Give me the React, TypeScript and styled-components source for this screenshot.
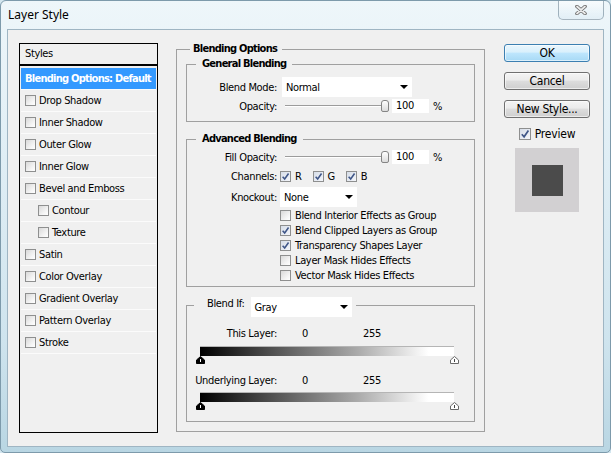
import React from 'react';
import styled, { createGlobalStyle } from 'styled-components';

const GlobalStyle = createGlobalStyle`
  html, body {
    margin: 0;
    padding: 0;
  }
  body {
    background: #d3e6ef;
    font-family: "DejaVu Sans Condensed", "DejaVu Sans", sans-serif;
    font-stretch: condensed;
    font-size: 11px;
    letter-spacing: -0.35px;
    color: #000;
  }
`;

const Window = styled.div`
  width: 611px;
  height: 453px;
  box-sizing: border-box;
  display: flex;
  flex-direction: column;
  background: linear-gradient(180deg, #eef6fa 0%, #e0eef5 35%, #cfe4ee 75%, #b9d6e3 100%);
  border: 1px solid #7d9aab;
  border-radius: 6px 6px 5px 5px;
`;

const TitleBar = styled.div`
  height: 28px;
  flex: none;
  display: flex;
  justify-content: space-between;
  align-items: flex-start;
  padding: 0 6px 0 7px;
`;

const Title = styled.div`
  font-family: "Noto Sans", "Open Sans", sans-serif;
  font-stretch: normal;
  letter-spacing: 0;
  font-size: 12px;
  line-height: 28px;
  color: #000;
`;

const CloseButton = styled.div`
  width: 46px;
  height: 19px;
  box-sizing: border-box;
  display: flex;
  align-items: center;
  justify-content: center;
  border: 1px solid rgba(70, 95, 115, 0.45);
  border-top: none;
  border-radius: 0 0 5px 5px;
  background: linear-gradient(180deg, rgba(255, 255, 255, 0.55), rgba(215, 232, 242, 0.5));
`;

const Client = styled.div`
  flex: 1;
  margin: 0 6px 5px 6px;
  border: 1px solid #9fb5c3;
  background: #f0f0f0;
  display: flex;
  align-items: flex-start;
  padding: 13px 13px 0 11px;
`;

/* ---------- left list ---------- */

const StyleList = styled.div`
  width: 139px;
  height: 390px;
  flex: none;
  box-sizing: border-box;
  border: 1px solid #000;
`;

const ListHeader = styled.div`
  height: 20px;
  line-height: 20px;
  padding-left: 5px;
  border-bottom: 2px solid #000;
  margin-bottom: 2px;
`;

const ListRow = styled.div<{ $active?: boolean; $indent?: number }>`
  height: 22px;
  box-sizing: border-box;
  margin: 0 1px;
  display: flex;
  align-items: center;
  gap: 3px;
  padding-left: ${(p) => 4 + (p.$indent || 0)}px;
  border-bottom: 1px solid #fbfbfb;
  background: ${(p) => (p.$active ? '#3399ff' : 'transparent')};
  color: ${(p) => (p.$active ? '#fff' : '#000')};
  font-weight: ${(p) => (p.$active ? 'bold' : 'normal')};
  letter-spacing: ${(p) => (p.$active ? '-0.75px' : '-0.35px')};
  white-space: nowrap;
  overflow: hidden;
`;

/* ---------- checkbox ---------- */

const Box = styled.span<{ $size: number; $checked?: boolean }>`
  width: ${(p) => p.$size}px;
  height: ${(p) => p.$size}px;
  flex: none;
  box-sizing: border-box;
  display: inline-flex;
  align-items: center;
  justify-content: center;
  border: 1px solid #8e8f8f;
  background: ${(p) =>
    p.$checked
      ? 'linear-gradient(135deg, #d6dde8 0%, #f4f6fa 100%)'
      : 'linear-gradient(135deg, #d9d9d9 0%, #f6f6f6 70%, #ffffff 100%)'};
`;

const Checkbox: React.FC<{ size?: number; checked?: boolean }> = ({ size = 11, checked }) => (
  <Box $size={size} $checked={checked}>
    {checked && (
      <svg width={size - 2} height={size - 2} viewBox="0 0 10 10">
        <path d="M1.8 5.2 L4.1 7.8 L8.4 1.6" fill="none" stroke="#3f5688" strokeWidth="1.7" />
      </svg>
    )}
  </Box>
);

/* ---------- middle groups ---------- */

const Group = styled.fieldset`
  width: 309px;
  flex: none;
  box-sizing: border-box;
  margin: 0 0 0 18px;
  padding: 3px 9px 9px 9px;
  border: 1px solid #a0a0a0;
  min-width: 0;
`;

const SubGroup = styled.fieldset<{ $mt?: number; $pt: number; $pb: number }>`
  margin: ${(p) => p.$mt || 0}px 0 0 0;
  padding: ${(p) => p.$pt}px 0 ${(p) => p.$pb}px 0;
  border: 1px solid #a0a0a0;
  min-width: 0;
`;

const Legend = styled.legend<{ $ml: number; $pl: number; $pr: number }>`
  margin-left: ${(p) => p.$ml}px;
  padding: 0 ${(p) => p.$pr}px 0 ${(p) => p.$pl}px;
  font-weight: bold;
  letter-spacing: -0.75px;
  line-height: 12px;
`;

const BlendIfLegend = styled.legend`
  margin-left: 7px;
  padding: 0 4px 0 13px;
  display: flex;
  align-items: flex-start;
  gap: 6px;
`;

const LegendLabel = styled.span`
  line-height: 14px;
`;

const Row = styled.div<{ $h: number; $mt?: number }>`
  display: grid;
  grid-template-columns: 90px auto;
  column-gap: 3px;
  align-items: center;
  height: ${(p) => p.$h}px;
  margin-top: ${(p) => p.$mt || 0}px;
`;

const Label = styled.span`
  text-align: right;
  white-space: nowrap;
`;

const Controls = styled.div`
  display: flex;
  align-items: center;
`;

const Select = styled.div<{ $w: number; $ml?: number; $mb?: number }>`
  width: ${(p) => p.$w}px;
  height: 20px;
  box-sizing: border-box;
  margin-left: ${(p) => p.$ml || 0}px;
  margin-bottom: ${(p) => p.$mb || 0}px;
  display: flex;
  align-items: center;
  justify-content: space-between;
  padding: 0 4px 0 4px;
  background: #fff;
  font-weight: normal;
`;

const Arrow = styled.span`
  width: 0;
  height: 0;
  border-left: 4px solid transparent;
  border-right: 4px solid transparent;
  border-top: 4px solid #000;
`;

const Slider = styled.div`
  width: 109px;
  box-sizing: border-box;
  padding-left: 5px;
  display: flex;
  align-items: center;
`;

const Track = styled.div`
  flex: 1;
  height: 1px;
  background: #9c9c9c;
  border-bottom: 1px solid #fff;
`;

const Thumb = styled.div`
  width: 8px;
  height: 12px;
  box-sizing: border-box;
  border: 1px solid #858585;
  border-radius: 3px 3px 2px 2px;
  background: linear-gradient(180deg, #ffffff, #dcdcdc);
`;

const NumberBox = styled.div`
  width: 37px;
  height: 14px;
  box-sizing: border-box;
  margin-left: 3px;
  padding-left: 4px;
  line-height: 14px;
  background: #fff;
`;

const Unit = styled.span`
  margin-left: 4px;
`;

const Channel = styled.span`
  display: inline-flex;
  align-items: center;
  gap: 4px;
  margin-right: 11px;
`;

const CheckRow = styled.div<{ $mt?: number }>`
  height: 15px;
  margin-top: ${(p) => p.$mt || 0}px;
  padding-left: 93px;
  display: flex;
  align-items: center;
  gap: 4px;
  white-space: nowrap;
`;

const ValueRow = styled.div<{ $mt: number }>`
  display: flex;
  align-items: center;
  height: 14px;
  margin-top: ${(p) => p.$mt}px;
`;

const ValueLabel = styled.span`
  width: 90px;
  text-align: right;
  white-space: nowrap;
`;

const Value = styled.span<{ $w: number; $ml?: number }>`
  width: ${(p) => p.$w}px;
  margin-left: ${(p) => p.$ml || 0}px;
`;

const GradientBar = styled.div<{ $mt: number }>`
  width: 254px;
  height: 10px;
  margin: ${(p) => p.$mt}px 0 0 13px;
  box-sizing: border-box;
  border-top: 1px solid #b5b5b5;
  background: linear-gradient(90deg, #000 0%, #555 30%, #aaa 62%, #fff 90%, #fff 100%);
`;

const Markers = styled.div`
  width: 263px;
  height: 8px;
  margin-left: 9px;
  display: flex;
  justify-content: space-between;
  align-items: flex-start;
`;

const Marker: React.FC<{ dark?: boolean }> = ({ dark }) => (
  <svg width="9" height="8" viewBox="0 0 9 8">
    <path
      d="M4.5 0.5 L8.5 4 L8.5 7.5 L0.5 7.5 L0.5 4 Z"
      fill={dark ? '#000' : '#fff'}
      stroke={dark ? '#000' : '#6a6a6a'}
      strokeWidth="1"
    />
    <line x1="4.5" y1="3" x2="4.5" y2="6" stroke={dark ? '#fff' : '#444'} strokeWidth="1" />
  </svg>
);

/* ---------- right column ---------- */

const ButtonColumn = styled.div`
  width: 86px;
  flex: none;
  margin-left: 19px;
  padding-top: 1px;
  display: flex;
  flex-direction: column;
  align-items: stretch;
`;

const Button = styled.button<{ $primary?: boolean }>`
  height: 18px;
  margin: 0 0 10px 0;
  padding: 0;
  box-sizing: border-box;
  font-family: "DejaVu Sans Condensed", "DejaVu Sans", sans-serif;
  font-stretch: condensed;
  font-size: 12px;
  letter-spacing: -0.3px;
  line-height: 16px;
  color: #000;
  border-radius: 3px;
  border: 1px solid ${(p) => (p.$primary ? '#3c7fb1' : '#707070')};
  background: ${(p) =>
    p.$primary
      ? 'linear-gradient(180deg, #eaf6fd 0%, #d9f0fc 45%, #bee6fd 50%, #a7d9f5 100%)'
      : 'linear-gradient(180deg, #f4f4f4 0%, #ebebeb 45%, #dddddd 50%, #cfcfcf 100%)'};
  box-shadow: inset 0 0 0 1px rgba(255, 255, 255, 0.6);
`;

const PreviewToggle = styled.div`
  display: flex;
  align-items: center;
  justify-content: center;
  gap: 4px;
  height: 13px;
  margin-top: -1px;
  font-size: 12px;
  letter-spacing: -0.2px;
`;

const Swatch = styled.div`
  width: 64px;
  height: 64px;
  margin: 8px auto 0 auto;
  display: flex;
  align-items: center;
  justify-content: center;
  background: #d2d0d2;
`;

const SwatchInner = styled.div`
  width: 31px;
  height: 31px;
  background: #4b4b4b;
`;

const styleItems: { name: string; indent?: number }[] = [
  { name: 'Drop Shadow' },
  { name: 'Inner Shadow' },
  { name: 'Outer Glow' },
  { name: 'Inner Glow' },
  { name: 'Bevel and Emboss' },
  { name: 'Contour', indent: 13 },
  { name: 'Texture', indent: 13 },
  { name: 'Satin' },
  { name: 'Color Overlay' },
  { name: 'Gradient Overlay' },
  { name: 'Pattern Overlay' },
  { name: 'Stroke' },
];

const advancedChecks = [
  { label: 'Blend Interior Effects as Group', checked: false },
  { label: 'Blend Clipped Layers as Group', checked: true },
  { label: 'Transparency Shapes Layer', checked: true },
  { label: 'Layer Mask Hides Effects', checked: false },
  { label: 'Vector Mask Hides Effects', checked: false },
];

const App: React.FC = () => {
  return (
    <>
      <GlobalStyle />
      <Window>
        <TitleBar>
          <Title>Layer Style</Title>
          <CloseButton>
            <svg width="12" height="10" viewBox="0 0 12 10">
              <path d="M2 1.5 L10 8.5 M10 1.5 L2 8.5" stroke="#6b6b6b" strokeWidth="3.6" strokeLinecap="round" />
              <path d="M2 1.5 L10 8.5 M10 1.5 L2 8.5" stroke="#ececec" strokeWidth="1.8" strokeLinecap="round" />
            </svg>
          </CloseButton>
        </TitleBar>

        <Client>
          <StyleList>
            <ListHeader>Styles</ListHeader>
            <ListRow $active>Blending Options: Default</ListRow>
            {styleItems.map((item) => (
              <ListRow key={item.name} $indent={item.indent}>
                <Checkbox />
                <span>{item.name}</span>
              </ListRow>
            ))}
          </StyleList>

          <Group>
            <Legend $ml={4} $pl={3} $pr={5}>Blending Options</Legend>

            <SubGroup $pt={7} $pb={8}>
              <Legend $ml={9} $pl={6} $pr={6}>General Blending</Legend>
              <Row $h={20}>
                <Label>Blend Mode:</Label>
                <Select $w={130} $ml={2}>
                  Normal
                  <Arrow />
                </Select>
              </Row>
              <Row $h={14} $mt={2}>
                <Label>Opacity:</Label>
                <Controls>
                  <Slider>
                    <Track />
                    <Thumb />
                  </Slider>
                  <NumberBox>100</NumberBox>
                  <Unit>%</Unit>
                </Controls>
              </Row>
            </SubGroup>

            <SubGroup $mt={11} $pt={5} $pb={3}>
              <Legend $ml={9} $pl={6} $pr={6}>Advanced Blending</Legend>
              <Row $h={14}>
                <Label>Fill Opacity:</Label>
                <Controls>
                  <Slider>
                    <Track />
                    <Thumb />
                  </Slider>
                  <NumberBox>100</NumberBox>
                  <Unit>%</Unit>
                </Controls>
              </Row>
              <Row $h={14} $mt={5}>
                <Label>Channels:</Label>
                <Controls>
                  {['R', 'G', 'B'].map((c) => (
                    <Channel key={c}>
                      <Checkbox checked />
                      {c}
                    </Channel>
                  ))}
                </Controls>
              </Row>
              <Row $h={20} $mt={4}>
                <Label>Knockout:</Label>
                <Select $w={77}>
                  None
                  <Arrow />
                </Select>
              </Row>
              {advancedChecks.map((c, i) => (
                <CheckRow key={c.label} $mt={i === 0 ? 1 : 0}>
                  <Checkbox checked={c.checked} />
                  {c.label}
                </CheckRow>
              ))}
            </SubGroup>

            <SubGroup $mt={10} $pt={13} $pb={11}>
              <BlendIfLegend>
                <LegendLabel>Blend If:</LegendLabel>
                <Select $w={101} $mb={-4}>
                  Gray
                  <Arrow />
                </Select>
              </BlendIfLegend>
              <ValueRow $mt={0}>
                <ValueLabel>This Layer:</ValueLabel>
                <Value $w={61} $ml={25}>0</Value>
                <Value $w={30}>255</Value>
              </ValueRow>
              <GradientBar $mt={6} />
              <Markers>
                <Marker dark />
                <Marker />
              </Markers>
              <ValueRow $mt={9}>
                <ValueLabel>Underlying Layer:</ValueLabel>
                <Value $w={61} $ml={25}>0</Value>
                <Value $w={30}>255</Value>
              </ValueRow>
              <GradientBar $mt={5} />
              <Markers>
                <Marker dark />
                <Marker />
              </Markers>
            </SubGroup>
          </Group>

          <ButtonColumn>
            <Button $primary>OK</Button>
            <Button>Cancel</Button>
            <Button>New Style...</Button>
            <PreviewToggle>
              <Checkbox size={12} checked />
              Preview
            </PreviewToggle>
            <Swatch>
              <SwatchInner />
            </Swatch>
          </ButtonColumn>
        </Client>
      </Window>
    </>
  );
};

export default App;
